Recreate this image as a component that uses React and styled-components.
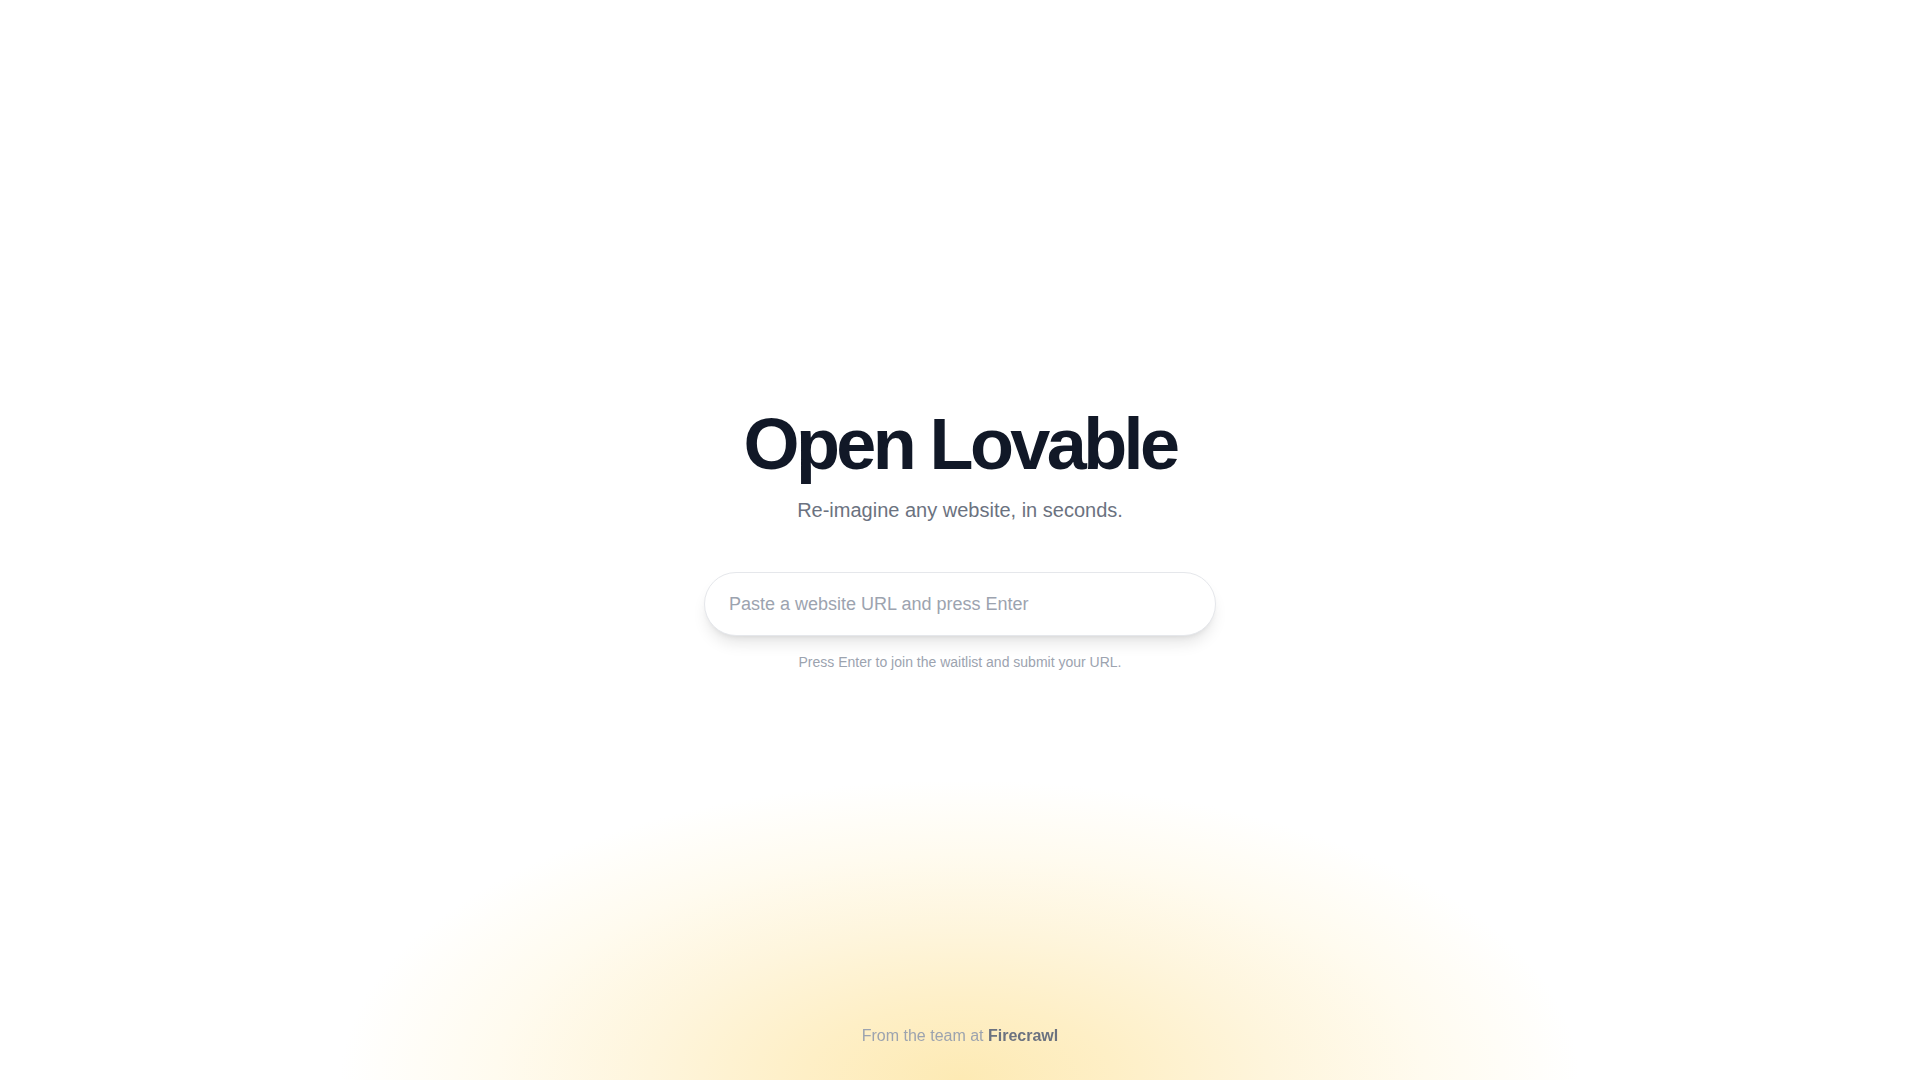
import styled, { createGlobalStyle } from "styled-components";

const GlobalStyle = createGlobalStyle`
  * {
    box-sizing: border-box;
  }
  html,
  body {
    margin: 0;
    padding: 0;
    background: #ffffff;
    font-family: "Liberation Sans", Arial, sans-serif;
  }
`;

const App = () => {
  return (
    <>
      <GlobalStyle />
      <Page>
        <Hero>
          <Title>Open Lovable</Title>
          <Subtitle>Re-imagine any website, in seconds.</Subtitle>
          <UrlForm onSubmit={(e) => e.preventDefault()}>
            <UrlInput type="text" placeholder="Paste a website URL and press Enter" />
            <Hint>Press Enter to join the waitlist and submit your URL.</Hint>
          </UrlForm>
        </Hero>
        <Footer>
          From the team at <Brand>Firecrawl</Brand>
        </Footer>
      </Page>
    </>
  );
};
export default App;

//styled-components

const Page = styled.div`
  min-height: 100vh;
  display: flex;
  align-items: center;
  justify-content: center;
  background: radial-gradient(
    ellipse 620px 300px at 50% 100%,
    #fdeab4 0%,
    #feefc6 25%,
    #fef5dc 50%,
    #fffbef 75%,
    rgba(255, 255, 255, 0) 100%
  );
`;

const Hero = styled.main`
  display: flex;
  flex-direction: column;
  align-items: center;
  text-align: center;
`;

const Title = styled.h1`
  margin: 0;
  font-size: 72px;
  line-height: 72px;
  font-weight: 700;
  letter-spacing: -0.05em;
  color: #111827;
`;

const Subtitle = styled.p`
  margin: 16px 0 0;
  font-size: 20px;
  line-height: 28px;
  color: #6b7280;
`;

const UrlForm = styled.form`
  margin-top: 48px;
  width: 512px;
  display: flex;
  flex-direction: column;
  align-items: center;
`;

const UrlInput = styled.input`
  width: 100%;
  padding: 17px 24px;
  font-family: inherit;
  font-size: 18px;
  line-height: 28px;
  color: #111827;
  background: #ffffff;
  border: 1px solid #e5e7eb;
  border-radius: 9999px;
  box-shadow: 0 10px 15px -3px rgba(0, 0, 0, 0.1),
    0 4px 6px -4px rgba(0, 0, 0, 0.1);
  outline: none;

  &::placeholder {
    color: #9ca3af;
  }
`;

const Hint = styled.p`
  margin: 16px 0 0;
  font-size: 14px;
  line-height: 20px;
  color: #9ca3af;
`;

const Footer = styled.footer`
  position: fixed;
  left: 0;
  right: 0;
  bottom: 32px;
  text-align: center;
  font-size: 16px;
  line-height: 24px;
  color: #9ca3af;
`;

const Brand = styled.span`
  font-weight: 700;
  color: #6b7280;
`;
